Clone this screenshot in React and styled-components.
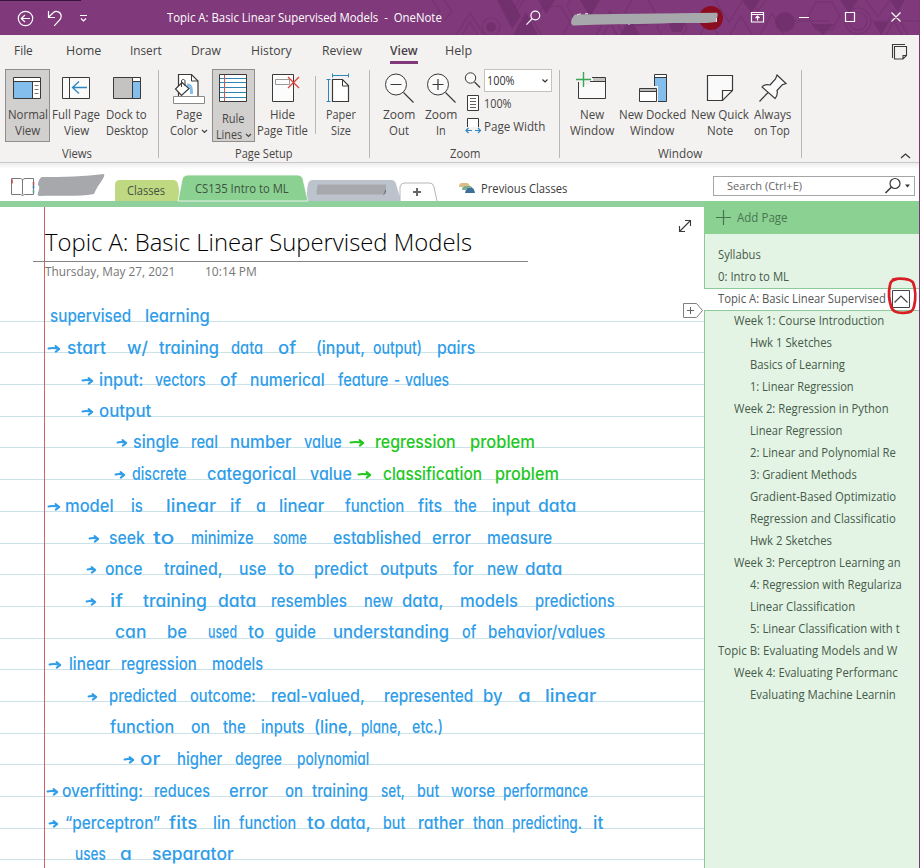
import React, { useLayoutEffect, useRef, useState } from 'react';
import styled, { createGlobalStyle, css } from 'styled-components';

const GlobalStyle = createGlobalStyle`
  * { box-sizing: border-box; }
  html, body { margin: 0; padding: 0; overflow: hidden; }
  body { font-family: "Open Sans", "Noto Sans", sans-serif; font-size: 12px; color: #444; background: #fff; }
`;

/* Text squeezed or stretched to a given advance width */
const FitBox = styled.span`
  display: inline-block;
  flex: none;
  width: ${(p) => p.$w}px;
  white-space: nowrap;
  text-align: left;
`;
const FitInner = styled.span`
  display: inline-block;
  transform-origin: 0 50%;
  white-space: pre;
`;
function Fit({ w, children }) {
  const ref = useRef(null);
  const [scale, setScale] = useState(1);
  useLayoutEffect(() => {
    const natural = ref.current.offsetWidth;
    if (natural) setScale(w / natural);
  }, [w, children]);
  return (
    <FitBox $w={w}>
      <FitInner ref={ref} style={{ transform: `scaleX(${scale})` }}>{children}</FitInner>
    </FitBox>
  );
}

const Svg = styled.svg`
  display: block;
  flex: none;
  overflow: visible;
`;
function Art({ x, y, w, h, children, ...rest }) {
  return (
    <Svg width={w} height={h} viewBox={`${x} ${y} ${w} ${h}`} fill="none" {...rest}>
      {children}
    </Svg>
  );
}

const Window = styled.div`
  width: 920px;
  height: 868px;
  display: flex;
  flex-direction: column;
  overflow: hidden;
  background: #fff;
  border-right: 1px solid #7a3778;
`;

/* ---------- title bar ---------- */
const TitleBar = styled.header`
  position: relative;
  flex: none;
  height: 35px;
  width: 920px;
  overflow: hidden;
  background: #80397b;
  color: #fff;
`;
const TitleArt = styled(Svg)`
  position: absolute;
  left: 0;
  top: 0;
`;
const TitleText = styled.div`
  position: relative;
  padding-left: 167px;
  font-size: 12px;
  line-height: 36px;
`;

function Pattern() {
  const hex = (cx, cy, r) =>
    `M${cx - r} ${cy}L${cx - r / 2} ${cy - r * 0.87}H${cx + r / 2}L${cx + r} ${cy}L${cx + r / 2} ${cy + r * 0.87}H${cx - r / 2}Z`;
  return (
    <g>
      <g stroke="#6f306c" strokeWidth="1.2" opacity=".6">
        <path d="M432 0l8 11-8 10M444 0l8 11-8 10M456 35l14-22 14 22M462 35l8-13 8 13" />
        <circle cx="491" cy="27" r="9" />
        <path d="M500 0l12 19 12-19M505 0l7 12 7-12" />
        <path d={hex(552, 22, 18)} />
        <path d={hex(581, 6, 14)} />
        <path d="M596 35l14-24 14 24M603 35l7-13 7 13" />
        <path d={hex(640, 12, 15)} />
        <path d={hex(672, 27, 15)} />
        <path d="M715 0l14 22 14-22M760 35l12-22 12 22M730 35l11-19 11 19M790 21h40" />
        <circle cx="858" cy="21" r="13" />
        <circle cx="858" cy="21" r="9" />
        <path d={hex(824, 16, 16)} />
        <path d="M866 0l12 17 12-17M870 21h50M880 35l14-24 14 24M886 35l8-14 8 14M700 35l9-16 9 16M750 0l8 11 8-11" />
      </g>
      <g fill="#6b2e68" opacity=".65">
        <path d="M497 0h15l9 16-9 13zM526 12l12 23h-25z" />
        <circle cx="491" cy="27" r="5" />
        <path d="M538 0l8 14 9-14zM580 0h20l-10 17zM620 35l10-17 10 17zM742 0h18l-9 13z" />
        <circle cx="785" cy="22" r="10" />
        <path d="M668 22h18l-5 10h-9zM812 24h22l-11 11zM840 0h18l-9 13zM873 22h16l-8 13zM890 0h15l-7 12z" />
      </g>
    </g>
  );
}

/* ---------- ribbon ---------- */
const Ribbon = styled.section`
  flex: none;
  height: 128px;
  background: #f3f2f1;
  border-bottom: 1px solid #cbc9c7;
  display: flex;
  flex-direction: column;
`;
const RibbonTabs = styled.nav`
  height: 34px;
  flex: none;
  display: flex;
  font-size: 12.5px;
  line-height: 31px;
  color: #444;
`;
const RibbonTab = styled.div`
  height: 29px;
  margin-left: ${(p) => p.$gap}px;
  ${(p) => p.$active && css`
    font-weight: 600;
    border-bottom: 3px solid #80397b;
    color: #4a3f49;
  `}
`;
const NotePane = styled.div`
  margin: 8px 0 0 420px;
`;
const Groups = styled.div`
  display: flex;
  height: 93px;
`;
const Group = styled.div`
  width: ${(p) => p.$w}px;
  display: flex;
  flex-direction: column;
`;
const GroupRow = styled.div`
  height: 77px;
  display: flex;
  padding-left: ${(p) => p.$pad}px;
`;
const GroupLabel = styled.div`
  text-align: center;
  line-height: 17px;
  color: #484644;
  padding-right: ${(p) => p.$shift || 0}px;
`;
const Separator = styled.div`
  flex: none;
  width: 1px;
  height: ${(p) => p.$h || 88}px;
  margin: ${(p) => p.$m || '1px 0 0'};
  background: #b9b7b5;
`;
const ToolButton = styled.div`
  flex: none;
  width: ${(p) => p.$w}px;
  height: 73px;
  margin-left: ${(p) => p.$gap || 0}px;
  display: flex;
  flex-direction: column;
  align-items: center;
  line-height: 16px;
  color: #484644;
  ${(p) => p.$pressed && css`
    background: #d2d0ce;
    box-shadow: inset 0 0 0 1px #908e8c;
  `}
`;
const Label = styled.div`
  display: flex;
  align-items: center;
  height: 16px;
  gap: 3px;
`;
const LabelPad = styled.div`
  flex: none;
  height: ${(p) => p.$h}px;
`;

function Tool({ x, w, gap, pressed, lines, chevron, low, children }) {
  return (
    <ToolButton $w={w} $gap={gap} $pressed={pressed}>
      <Art x={x} y={69} w={w} h={38}>{children}</Art>
      <LabelPad $h={low ? 4 : 0} />
      {lines.map(([text, tw], i) => (
        <Label key={i}>
          <Fit w={tw}>{text}</Fit>
          {chevron && i === 1 && (
            <Art x={0} y={0} w={7} h={5}><path d="M1 1l2.500 2.500L6 1" stroke="#444" strokeWidth="1.200" /></Art>
          )}
        </Label>
      ))}
    </ToolButton>
  );
}

const ZoomColumn = styled.div`
  margin-left: 6px;
  display: flex;
  flex-direction: column;
  color: #484644;
`;
const ZoomLine = styled.div`
  display: flex;
  align-items: center;
  height: 23px;
`;
const ZoomSelect = styled.div`
  width: 68px;
  height: 23px;
  border: 1px solid #c4c2c0;
  background: #fff;
  display: flex;
  align-items: center;
  justify-content: space-between;
  padding: 0 2px 0 2px;
  color: #333;
`;

/* ---------- section tabs ---------- */
const SectionBar = styled.div`
  flex: none;
  height: 38px;
  display: flex;
  align-items: flex-end;
  background: linear-gradient(#ececec, #fff 6px);
`;
const Notebook = styled.div`
  width: 115px;
  height: 38px;
`;
const SectionTab = styled.div`
  position: relative;
  flex: none;
  width: ${(p) => p.$w}px;
  height: ${(p) => p.$h}px;
  padding-left: ${(p) => p.$pl || 0}px;
  line-height: ${(p) => p.$lh || 20}px;
  color: #3f5140;
`;
const TabShape = styled(Svg)`
  position: absolute;
  left: 0;
  bottom: 0;
`;
const TabText = styled.div`
  position: relative;
`;
const Previous = styled.div`
  display: flex;
  align-items: center;
  gap: 6px;
  height: 26px;
  margin-left: 22px;
  color: #3b3a39;
`;
const SearchBox = styled.div`
  width: 202px;
  height: 20px;
  margin: 0 4px 5px auto;
  border: 1px solid #a6a6a6;
  display: flex;
  align-items: center;
  justify-content: space-between;
  padding-left: 13px;
  color: #666;
  font-size: 11.5px;
  line-height: 16px;
`;

/* ---------- page ---------- */
const Body = styled.main`
  flex: 1;
  display: flex;
  min-height: 0;
`;
const PageColumn = styled.section`
  width: 704px;
  border-top: 6px solid #90d09c;
  overflow: hidden;
`;
const Page = styled.article`
  position: relative;
  width: 704px;
  height: 661px;
  background: #fff;
`;
const RuleLine = styled.div`
  height: ${(p) => p.$h}px;
  border-bottom: 1px solid #cbe2e9;
`;
const MarginLine = styled.div`
  position: absolute;
  left: 44px;
  top: 0;
  width: 1px;
  height: 661px;
  background: #cf6361;
`;
const PageHead = styled.div`
  position: absolute;
  left: 33px;
  top: 18px;
  width: 495px;
`;
const PageTitle = styled.h1`
  margin: 0;
  height: 37px;
  padding-left: 12px;
  border-bottom: 1px solid #858585;
  font-size: 24px;
  font-weight: 300;
  line-height: 33px;
  color: #000;
`;
const PageDate = styled.div`
  display: flex;
  gap: 30px;
  padding-left: 12px;
  line-height: 20px;
  font-size: 12px;
  color: #767676;
`;
const Floating = styled.div`
  position: absolute;
  left: ${(p) => p.$x}px;
  top: ${(p) => p.$y}px;
`;
const Ink = styled.span`
  position: absolute;
  left: ${(p) => p.$x}px;
  top: ${(p) => p.$y}px;
  font-family: Inter, "Open Sans", sans-serif;
  font-feature-settings: "cv11" 1;
  font-size: 17.5px;
  font-weight: 500;
  line-height: 24px;
  color: ${(p) => (p.$green ? '#22c71e' : '#2f9de8')};
`;

const ruleYs = [321, 352, 384, 416, 447, 479, 511, 543, 574, 606, 638, 669, 701, 733, 764, 796, 828, 859];

/* Each entry: baseline, then words as [text, left, right, green]; ">" is a drawn arrow */
const notes = [
  [322, ['supervised', 50, 131], ['learning', 145, 210]],
  [354, ['>', 48, 60], ['start', 67, 106], ['w/', 127, 148], ['training', 159, 219], ['data', 231, 263], ['of', 278, 296], ['(input,', 316, 365], ['output)', 373, 422], ['pairs', 437, 475]],
  [385.5, ['>', 82, 93], ['input:', 99, 144], ['vectors', 155, 206], ['of', 220, 237], ['numerical', 250, 325], ['feature', 338, 388], ['-', 394, 400], ['values', 405, 449]],
  [416.5, ['>', 82, 93], ['output', 99, 151]],
  [448, ['>', 117, 127], ['single', 133, 179], ['real', 191, 218], ['number', 230, 291], ['value', 304, 342], ['>', 350, 364, 1], ['regression', 375, 456, 1], ['problem', 470, 535, 1]],
  [480, ['>', 115, 125], ['discrete', 132, 187], ['categorical', 207, 296], ['value', 310, 352], ['>', 358, 371, 1], ['classification', 383, 482, 1], ['problem', 495, 559, 1]],
  [512, ['>', 48, 60], ['model', 65, 114], ['is', 131, 143], ['linear', 166, 216], ['if', 230, 241], ['a', 256, 266], ['linear', 279, 324], ['function', 345, 404], ['fits', 418, 442], ['the', 454, 477], ['input', 492, 530], ['data', 538, 576]],
  [544, ['>', 89, 99], ['seek', 109, 145], ['to', 153, 174], ['minimize', 191, 254], ['some', 273, 307], ['established', 333, 421], ['error', 432, 471], ['measure', 487, 552]],
  [575, ['>', 87, 96], ['once', 105, 142], ['trained,', 164, 223], ['use', 239, 266], ['to', 278, 294], ['predict', 314, 368], ['outputs', 380, 438], ['for', 453, 474], ['new', 487, 518], ['data', 525, 562]],
  [607, ['>', 86, 96], ['if', 110, 123], ['training', 143, 207], ['data', 218, 256], ['resembles', 271, 347], ['new', 364, 393], ['data,', 402, 444], ['models', 460, 518], ['predictions', 535, 615]],
  [638, ['can', 115, 146], ['be', 167, 187], ['used', 208, 237], ['to', 248, 264], ['guide', 275, 316], ['understanding', 333, 449], ['of', 462, 476], ['behavior/values', 488, 605]],
  [670, ['>', 49, 61], ['linear', 69, 110], ['regression', 121, 197], ['models', 212, 263]],
  [702, ['>', 88, 97], ['predicted', 109, 177], ['outcome:', 190, 256], ['real-valued,', 271, 365], ['represented', 384, 473], ['by', 483, 503], ['a', 518, 531], ['linear', 545, 596]],
  [733, ['function', 110, 174], ['on', 191, 210], ['the', 223, 246], ['inputs', 261, 305], ['(line,', 314, 353], ['plane,', 361, 401], ['etc.)', 412, 443]],
  [765, ['>', 124, 134], ['or', 140, 160], ['higher', 177, 222], ['degree', 235, 282], ['polynomial', 297, 369]],
  [797, ['>', 47, 58], ['overfitting:', 62, 143], ['reduces', 154, 210], ['error', 229, 268], ['on', 285, 303], ['training', 312, 368], ['set,', 381, 405], ['but', 417, 439], ['worse', 451, 495], ['performance', 503, 588]],
  [829, ['>', 49, 58], ['“perceptron”', 65, 160], ['fits', 169, 197], ['lin', 213, 230], ['function', 239, 296], ['to', 307, 325], ['data,', 330, 371], ['but', 383, 405], ['rather', 418, 464], ['than', 473, 504], ['predicting.', 512, 582], ['it', 593, 603]],
  [860, ['uses', 75, 106], ['a', 120, 132], ['separator', 152, 234]],
];

function InkWord({ base, word }) {
  const [text, l, r, green] = word;
  const w = r - l;
  if (text === '>') {
    return (
      <Floating $x={l} $y={base - 207 - 10}>
        <Art x={0} y={0} w={w} h={10}>
          <path
            d={`M.5 4.4Q${w / 2} 3.6 ${w - 1} 5M${w - 4.5} 2L${w - 0.7} 5L${w - 4.2} 7.600`}
            stroke={green ? '#22c71e' : '#2f9de8'} strokeWidth="2" strokeLinecap="round" strokeLinejoin="round"
          />
        </Art>
      </Floating>
    );
  }
  return <Ink $x={l} $y={base - 207 - 17.6} $green={green}><Fit w={w}>{text}</Fit></Ink>;
}

/* ---------- page list ---------- */
const Sidebar = styled.aside`
  width: 215px;
  background: #e3f4e5;
  border-left: 1px solid #8cc99a;
  display: flex;
  flex-direction: column;
`;
const AddPage = styled.div`
  height: 33px;
  flex: none;
  margin-left: -1px;
  padding-left: 12px;
  background: #8ad192;
  display: flex;
  align-items: center;
  gap: 6px;
  color: #4a7551;
  font-size: 12px;
`;
const PageList = styled.div`
  padding-top: 10px;
`;
const PageItem = styled.div`
  position: relative;
  height: 22px;
  line-height: 22px;
  padding-left: ${(p) => 13 + p.$level * 16}px;
  color: #465a49;
  ${(p) => p.$active && css`
    margin-left: -1px;
    padding-left: 14px;
    height: 23px;
    line-height: 20px;
    margin-bottom: -1px;
    background: #fff;
    border-top: 1px solid #8ccb98;
    border-bottom: 1px solid #8ccb98;
    color: #555;
  `}
`;
const Callout = styled(Svg)`
  position: absolute;
  left: 182px;
  top: -13px;
`;

const pages = [
  ['Syllabus', 0, 43], ['0: Intro to ML', 0, 71], ['Topic A: Basic Linear Supervised', 0, 168, true],
  ['Week 1: Course Introduction', 1, 150], ['Hwk 1 Sketches', 2, 82], ['Basics of Learning', 2, 95],
  ['1: Linear Regression', 2, 104], ['Week 2: Regression in Python', 1, 155], ['Linear Regression', 2, 92],
  ['2: Linear and Polynomial Re', 2, 146], ['3: Gradient Methods', 2, 107], ['Gradient-Based Optimizatio', 2, 146],
  ['Regression and Classificatio', 2, 146], ['Hwk 2 Sketches', 2, 82], ['Week 3: Perceptron Learning an', 1, 167],
  ['4: Regression with Regulariza', 2, 152], ['Linear Classification', 2, 105], ['5: Linear Classification with t', 2, 150],
  ['Topic B: Evaluating Models and W', 0, 179], ['Week 4: Evaluating Performanc', 1, 164], ['Evaluating Machine Learnin', 2, 146],
];

const tabs = [['File', 14, 19], ['Home', 33, 35], ['Insert', 29, 32], ['Draw', 29, 30], ['History', 30, 41], ['Review', 30, 40], ['View', 28, 28, true], ['Help', 27, 27]];

const ink = '#3b3a39';

export default function App() {
  return (
    <>
      <GlobalStyle />
      <Window>
        <TitleBar>
          <TitleArt width="920" height="35" viewBox="0 0 920 35" fill="none">
            <Pattern />
            <path d="M0 .5h81" stroke="#35143a" />
            <g stroke="#fff" strokeWidth="1.200">
              <circle cx="25.500" cy="18.500" r="7.200" />
              <path d="M30 18.500h-8.500M25 15l-3.700 3.500L25 22" />
              <path d="M48.500 11v6.500h6.500M48.700 17l4.500-4.300c3-2.800 8-.5 8 3.500 0 2-1 3.200-2 4.200l-5 5.500" />
              <path d="M80 15.500h7M81 18.500l2.500 2.500 2.500-2.500" />
              <circle cx="535.300" cy="15.500" r="4.400" />
              <path d="M532.200 18.700l-5.700 6" />
              <path d="M751.500 12.500h12v9.500h-12zM751.500 14.500h12M757.500 20.500v-4.500M755.500 18l2-2 2 2" />
              <path d="M799 17.500h10M845.500 12.500h9v9h-9zM891.500 12.500l9 9M900.500 12.500l-9 9" />
            </g>
            <circle cx="711" cy="18" r="12" fill="#8b0d22" />
            <path d="M575 14.500l142-1.800c2 2-1 7-1 9.300-12 2-30 .4-55 1.500-30 1-60 .5-88 2-4-2-1-8 2-11z" fill="#a7a8ab" />
            <path d="M577 14.500l4-.6M585 13.800l3-.2M716.500 18v4M629 24v1" stroke="#e9dfe9" strokeWidth="1" />
          </TitleArt>
          <TitleText><Fit w={275}>{'Topic A: Basic Linear Supervised Models  -  OneNote'}</Fit></TitleText>
        </TitleBar>

        <Ribbon>
          <RibbonTabs>
            {tabs.map(([t, gap, w, active]) => (
              <RibbonTab key={t} $gap={gap} $active={active}><Fit w={w}>{t}</Fit></RibbonTab>
            ))}
            <NotePane>
              <Art x={892} y={43} w={15} h={16}>
                <path d="M905 44.500h-12.500V58M894.500 46.500h12v9l-3.500 3.500h-8.500zM906.500 55.500h-3.500V59" stroke={ink} strokeWidth="1.100" />
              </Art>
            </NotePane>
          </RibbonTabs>
          <Groups>
            <Group $w={158}>
              <GroupRow $pad={5}>
                <Tool x={5} w={45} pressed lines={[['Normal', 40], ['View', 25]]}>
                  <path d="M13.500 77.500h27v21h-27z" fill="#fff" stroke={ink} />
                  <path d="M14 82h18.500v16H14z" fill="#83beec" />
                  <path d="M13.500 81.500h27M32.500 81.500v17" stroke={ink} />
                  <path d="M34.500 85.500h4M34.500 89.500h4M34.500 93.500h4" stroke="#777" />
                </Tool>
                <Tool x={52} w={48} gap={2} lines={[['Full Page', 48], ['View', 25]]}>
                  <path d="M62.500 77.500h27v21h-27z" fill="#fafafa" stroke={ink} />
                  <path d="M69.500 77.500v21" stroke={ink} />
                  <path d="M87 87.500H73M79 81.500l-6.500 6 6.500 6" stroke="#2e86c1" strokeWidth="1.300" />
                </Tool>
                <Tool x={103} w={47} gap={3} lines={[['Dock to', 41], ['Desktop', 42]]}>
                  <path d="M113.500 77.500h27v21h-27z" fill="#c4c3c2" stroke={ink} />
                  <path d="M132.500 77.500h8v4h-8z" fill="#fff" stroke={ink} />
                  <path d="M132.500 81.500h8v17h-8z" fill="#83beec" stroke={ink} />
                </Tool>
              </GroupRow>
              <GroupLabel $shift={4}><Fit w={30}>Views</Fit></GroupLabel>
            </Group>
            <Separator />
            <Group $w={210}>
              <GroupRow $pad={7}>
                <Tool x={166} w={46} chevron lines={[['Page', 26], ['Color', 28]]}>
                  <path d="M178.500 97V74.500h13l6.500 6.500v16" fill="#fff" stroke={ink} strokeWidth="1.200" />
                  <path d="M191.500 74.500V81h6.500" stroke={ink} />
                  <path d="M187 85c4 0 4.500 2 4.500 9" stroke="#83beec" strokeWidth="3" />
                  <path d="M182 82.500l7 6-7.500 7-6-6.500z" fill="#fff" stroke={ink} strokeWidth="1.200" />
                  <path d="M181.500 87v-6c0-2 3.500-2 3.500 0v5" stroke={ink} />
                  <path d="M173.500 96.500h31v7h-31z" fill="#fff" stroke="#8b8988" />
                </Tool>
                <Tool x={212} w={43} pressed low chevron lines={[['Rule', 23], ['Lines', 26]]}>
                  <path d="M219.500 74.500h27v27h-27z" fill="#fff" stroke={ink} />
                  <path d="M220 78.500h26M220 82.500h26M220 87.500h26M220 92.500h26M220 97.500h26" stroke="#2e86b5" strokeWidth="1.200" />
                  <path d="M224.500 75v26" stroke="#d9534f" />
                </Tool>
                <Tool x={256} w={53} gap={1} lines={[['Hide', 25], ['Page Title', 51]]}>
                  <path d="M272.500 74.500h21v27h-21z" fill="#fcfcfc" stroke={ink} />
                  <path d="M275.500 79.500h14v5h-14z" stroke="#999" />
                  <path d="M288 77l11 11M299 77l-11 11" stroke="#e0403c" strokeWidth="1.300" />
                </Tool>
                <Separator $h={58} $m="7px 0 0 6px" />
                <Tool x={322} w={38} gap={6} lines={[['Paper', 30], ['Size', 20]]}>
                  <path d="M332.500 79.500h10l6 6v16h-16z" fill="#fff" stroke={ink} strokeWidth="1.200" />
                  <path d="M342.500 79.500v6.500h6" stroke={ink} />
                  <path d="M332.500 75.500h16M332.500 73.500v4M348.500 73.500v4M328.500 79.500v22M326.500 79.500h4M326.500 101.500h4" stroke="#2e86c1" />
                </Tool>
              </GroupRow>
              <GroupLabel><Fit w={58}>Page Setup</Fit></GroupLabel>
            </Group>
            <Separator />
            <Group $w={189}>
              <GroupRow $pad={10}>
                <Tool x={380} w={38} lines={[['Zoom', 32], ['Out', 20]]}>
                  <circle cx="396" cy="84.500" r="10.500" fill="#fafafa" stroke={ink} />
                  <path d="M390.500 84.500h11M403.500 92.500l10 10" stroke={ink} strokeWidth="1.200" />
                </Tool>
                <Tool x={421} w={40} gap={3} lines={[['Zoom', 32], ['In', 10]]}>
                  <circle cx="438" cy="84.500" r="10.500" fill="#fafafa" stroke={ink} />
                  <path d="M432.500 84.500h11M438 79v11M445.500 92.500l10 10" stroke={ink} strokeWidth="1.200" />
                </Tool>
                <ZoomColumn>
                  <ZoomLine>
                    <Art x={467} y={69} w={17} h={23}>
                      <circle cx="470.500" cy="78" r="5.200" fill="#fafafa" stroke={ink} />
                      <path d="M474.500 82l5.500 5.500" stroke={ink} strokeWidth="1.200" />
                    </Art>
                    <ZoomSelect>
                      <Fit w={28}>100%</Fit>
                      <Art x={0} y={0} w={8} h={6}><path d="M1.500 1.500L4 4l2.500-2.500" stroke="#333" strokeWidth="1.200" /></Art>
                    </ZoomSelect>
                  </ZoomLine>
                  <ZoomLine>
                    <Art x={467} y={92} w={17} h={23}>
                      <path d="M467.500 95.500h11v15h-11z" fill="#fff" stroke={ink} />
                      <path d="M470 98.500h6M470 101.500h6M470 104.500h6M470 107.500h6" stroke={ink} strokeWidth=".8" />
                    </Art>
                    <Fit w={28}>100%</Fit>
                  </ZoomLine>
                  <ZoomLine>
                    <Art x={467} y={115} w={17} h={23}>
                      <path d="M467.500 127v-8.500h11v8.500" fill="#fff" stroke={ink} />
                      <path d="M466 130.500h6M475 130.500h6M468.500 128l-2.500 2.500 2.500 2.500M478 128l2.500 2.500-2.500 2.500" stroke="#2e86c1" strokeWidth="1.200" />
                    </Art>
                    <Fit w={61}>Page Width</Fit>
                  </ZoomLine>
                </ZoomColumn>
              </GroupRow>
              <GroupLabel><Fit w={30}>Zoom</Fit></GroupLabel>
            </Group>
            <Separator />
            <Group $w={241}>
              <GroupRow $pad={8}>
                <Tool x={568} w={48} lines={[['New', 24], ['Window', 44]]}>
                  <path d="M578.500 77.500h27v21h-27z" fill="#fafafa" stroke={ink} />
                  <path d="M593 78h12v3h-12z" fill="#c4c3c2" />
                  <path d="M578 81.500h27.500" stroke={ink} />
                  <path d="M576 73h16v8h-2v4h-11v-3h-3z" fill="#f3f2f1" />
                  <path d="M578.500 82v12" stroke={ink} />
                  <path d="M576 79.500h15M583.500 72v15" stroke="#3aa655" strokeWidth="1.400" />
                </Tool>
                <Tool x={617} w={70} gap={1} lines={[['New Docked', 67], ['Window', 44]]}>
                  <path d="M654.500 74.500h12v27h-12z" fill="#83beec" stroke={ink} />
                  <path d="M655 75h11v2.500h-11z" fill="#fff" />
                  <path d="M654.500 77.500h12" stroke={ink} />
                  <path d="M637 86h21v17h-21z" fill="#f3f2f1" />
                  <path d="M639.500 88.500h17v13h-17z" fill="#fff" stroke={ink} />
                  <path d="M640 89h16v2h-16z" fill="#bbb" />
                  <path d="M639.500 91.500h17" stroke={ink} />
                </Tool>
                <Tool x={690} w={60} gap={3} lines={[['New Quick', 58], ['Note', 26]]}>
                  <path d="M707.500 75.500h25v15l-10 10h-15z" fill="#fafafa" stroke={ink} strokeWidth="1.200" />
                  <path d="M732.500 90.500h-10v10" stroke={ink} strokeWidth="1.200" />
                </Tool>
                <Tool x={751} w={42} gap={1} lines={[['Always', 37], ['on Top', 36]]}>
                  <path d="M777 75l9 8.500-2.500.8-1 .2-5.500 6c.8 3 .2 5.500-2 8L762 87c2-2.500 4.500-2.700 8-2l5.500-6z" fill="#fafafa" stroke={ink} strokeWidth="1.200" />
                  <path d="M768 92.500l-8.500 9" stroke={ink} strokeWidth="1.200" />
                </Tool>
              </GroupRow>
              <GroupLabel $shift={2}><Fit w={44}>Window</Fit></GroupLabel>
            </Group>
            <Separator />
            <Art x={802} y={69} w={117} h={93}>
              <path d="M901 158l4.500-4 4.500 4" stroke={ink} strokeWidth="1.300" />
            </Art>
          </Groups>
        </Ribbon>

        <SectionBar>
          <Notebook>
            <Art x={0} y={163} w={115} h={38}>
              <path d="M14 178.500h-2.500v16h9l2 1 2-1h9v-16H25l-2.500 1-2-1H14M22.500 179.500v15" stroke="#777" />
              <path d="M12 179.500v4M33.500 182v3" stroke="#c0504d" strokeWidth="1.600" />
              <path d="M33.500 185.500v3" stroke="#3579a8" strokeWidth="1.600" />
              <path d="M33.500 190v3" stroke="#5aa587" strokeWidth="1.600" />
              <path d="M42 177c20 0 44-.5 62-3 2 3-6 10-10 20-16 3-36 1-55 2-4-1 3-8-1-11 0-2 1-7 4-8z" fill="#a7a8ab" />
            </Art>
          </Notebook>
          <SectionTab $w={64} $h={21} $pl={12} $lh={21}>
            <TabShape width="66" height="21" viewBox="0 0 66 21"><path d="M0 21V5Q0 0 5 0h53q4 0 5 4l3 17z" fill="#bfd982" /></TabShape>
            <TabText><Fit w={38}>Classes</Fit></TabText>
          </SectionTab>
          <SectionTab $w={129} $h={26} $pl={16} $lh={28}>
            <TabShape width="130" height="26" viewBox="0 0 130 26"><path d="M-1 26L3 5Q4 0 9 0h110q4 0 5 4l5 22z" fill="#8ad192" stroke="#fff" strokeWidth=".8" /></TabShape>
            <TabText><Fit w={94}>CS135 Intro to ML</Fit></TabText>
          </SectionTab>
          <SectionTab $w={92} $h={21}>
            <TabShape width="93" height="21" viewBox="308 180 93 21">
              <path d="M308 201q-2-8 0-17 1-4 5-4h78q4 0 5 4l5 17z" fill="#bcc3cc" />
              <path d="M318 184.500h68v5c0 3-1 5-3 5h-66c-1 0 0-8 1-10z" fill="#a7a8ab" />
              <path d="M385.500 190q0 4-2 4.500" stroke="#55657c" fill="none" />
            </TabShape>
          </SectionTab>
          <SectionTab $w={37} $h={19}>
            <TabShape width="37" height="19" viewBox="400 182 37 19">
              <path d="M400 201v-14q1-4 4-4h26q3 0 4 4l3 14" fill="#fff" stroke="#b5b5b5" />
              <path d="M413 192h8M417 188v8" stroke="#666" strokeWidth="2" />
            </TabShape>
          </SectionTab>
          <Previous>
            <Art x={459} y={182} w={16} h={12}>
              <path d="M459 187q0-4 3-4h5q2 0 3 3h-7v1z" fill="#dbbd80" />
              <path d="M462 190q0-4 3-4h5q2 0 3 3h-7v1z" fill="#7fab93" />
              <path d="M465 193q1-5 4-5h3q2 0 3 5z" fill="#3d6f9c" />
            </Art>
            <Fit w={86}>Previous Classes</Fit>
          </Previous>
          <SearchBox>
            <Fit w={75}>Search (Ctrl+E)</Fit>
            <Art x={882} y={177} w={31} h={18}>
              <circle cx="894" cy="183.500" r="5" stroke={ink} strokeWidth="1.200" />
              <path d="M890.500 187l-6 6" stroke={ink} strokeWidth="1.600" />
              <path d="M904 184.500h5l-2.500 3z" fill="#333" />
            </Art>
          </SearchBox>
        </SectionBar>

        <Body>
          <PageColumn>
            <Page>
              {ruleYs.map((y, i) => <RuleLine key={y} $h={i ? y - ruleYs[i - 1] : y - 206} />)}
              <MarginLine />
              <PageHead>
                <PageTitle><Fit w={427}>Topic A: Basic Linear Supervised Models</Fit></PageTitle>
                <PageDate><Fit w={130}>Thursday, May 27, 2021</Fit><Fit w={52}>10:14 PM</Fit></PageDate>
              </PageHead>
              {notes.map(([base, ...words]) => words.map((word) => (
                <InkWord key={`${base}-${word[1]}`} base={base} word={word} />
              )))}
              <Floating $x={678} $y={13}>
                <Art x={678} y={220} w={14} h={13}>
                  <path d="M679.500 231.500l11-11M685 220.500h5.500v5.500M679.500 226v5.500h5.500" stroke={ink} strokeWidth="1.100" />
                </Art>
              </Floating>
              <Floating $x={683} $y={96}>
                <Art x={683} y={303} w={20} h={15}>
                  <path d="M683.500 303.500h13l6 7-6 7h-13z" fill="#fff" stroke="#808080" />
                  <path d="M687 310.500h7M690.500 307v7" stroke="#666" />
                </Art>
              </Floating>
            </Page>
          </PageColumn>
          <Sidebar>
            <AddPage>
              <Art x={716} y={210} w={15} h={15}><path d="M716 217.500h15M723.500 210v15" stroke="#4a7551" strokeWidth="1.200" /></Art>
              <Fit w={51}>Add Page</Fit>
            </AddPage>
            <PageList>
              {pages.map(([t, level, w, active]) => (
                <PageItem key={t} $level={level} $active={active}>
                  <Fit w={w}>{t}</Fit>
                  {active && (
                    <Callout width="33" height="40" viewBox="886 276 33 40" fill="none">
                      <path d="M892.500 290.500h17v17h-17z" fill="#fff" stroke="#444" />
                      <path d="M894.500 302.500l6.500-6.500 6.500 6.500" stroke="#444" strokeWidth="1.200" />
                      <path d="M893 279.500c6-1.500 17-1 20 3 2.500 6 3 16 1 24-1 5-4 6-10 6.300-7 .4-11-1.300-12.500-5-2.500-7-3-16-1.500-23 .5-3 1.500-5 6-5.500" stroke="#d91f26" strokeWidth="2.800" strokeLinecap="round" />
                    </Callout>
                  )}
                </PageItem>
              ))}
            </PageList>
          </Sidebar>
        </Body>
      </Window>
    </>
  );
}
